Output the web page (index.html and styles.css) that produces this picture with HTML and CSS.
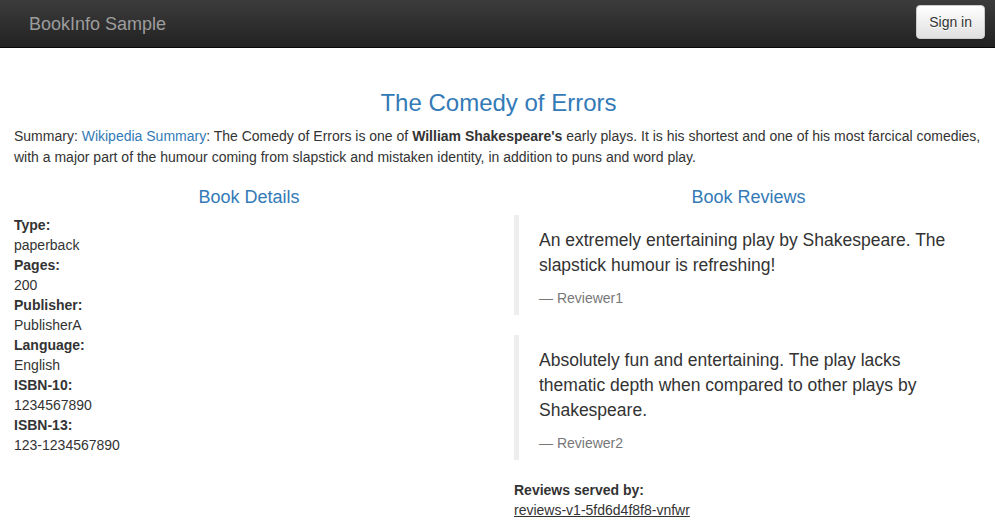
FILE: index.html
```html
<!DOCTYPE html>
<html>
<head>
<meta charset="utf-8">
<title>Simple Bookstore App</title>
<link rel="stylesheet" href="styles.css">
</head>
<body>
<nav class="navbar">
  <a class="brand" href="#">BookInfo Sample</a>
  <button type="button" class="btn">Sign in</button>
</nav>
<div class="page">
  <div class="summary-row">
    <h3 class="title">The Comedy of Errors</h3>
    <p class="summary">Summary: <a href="#">Wikipedia Summary</a>: The Comedy of Errors is one of <b>William Shakespeare's</b> early plays. It is his shortest and one of his most farcical comedies, with a major part of the humour coming from slapstick and mistaken identity, in addition to puns and word play.</p>
  </div>
  <div class="cols">
    <div class="col col-left">
      <h4 class="subtitle">Book Details</h4>
      <dl class="details">
        <dt>Type:</dt><dd>paperback</dd>
        <dt>Pages:</dt><dd>200</dd>
        <dt>Publisher:</dt><dd>PublisherA</dd>
        <dt>Language:</dt><dd>English</dd>
        <dt>ISBN-10:</dt><dd>1234567890</dd>
        <dt>ISBN-13:</dt><dd>123-1234567890</dd>
      </dl>
    </div>
    <div class="col">
      <h4 class="subtitle">Book Reviews</h4>
      <blockquote class="review">
        <p>An extremely entertaining play by Shakespeare. The slapstick humour is refreshing!</p>
        <small>Reviewer1</small>
      </blockquote>
      <blockquote class="review">
        <p>Absolutely fun and entertaining. The play lacks thematic depth when compared to other plays by Shakespeare.</p>
        <small>Reviewer2</small>
      </blockquote>
      <dl class="details">
        <dt>Reviews served by:</dt>
        <dd><u>reviews-v1-5fd6d4f8f8-vnfwr</u></dd>
      </dl>
    </div>
  </div>
</div>
</body>
</html>
```

FILE: styles.css
```css
html, body {
  margin: 0;
  padding: 0;
  overflow-x: hidden;
}
body {
  font-family: "Liberation Sans", Arial, sans-serif;
  font-size: 14px;
  line-height: 20px;
  color: #333;
  background: #fff;
}
a {
  color: #337ab7;
  text-decoration: none;
}
.navbar {
  box-sizing: border-box;
  height: 48px;
  display: flex;
  align-items: flex-start;
  justify-content: space-between;
  background-image: linear-gradient(to bottom, #3c3c3c 0, #222 100%);
  border-bottom: 1px solid #080808;
  padding: 0 10px 0 29px;
}
.brand {
  color: #9d9d9d;
  font-size: 18px;
  line-height: 20px;
  padding-top: 14px;
}
.btn {
  margin-top: 5px;
  height: 34px;
  padding: 6px 12px;
  font-family: "Liberation Sans", Arial, sans-serif;
  font-size: 14px;
  line-height: 20px;
  color: #333;
  border: 1px solid #ccc;
  border-radius: 4px;
  background-image: linear-gradient(to bottom, #fff 0, #e0e0e0 100%);
  text-shadow: 0 1px 0 #fff;
  box-shadow: inset 0 1px 0 rgba(255,255,255,.15), 0 1px 1px rgba(0,0,0,.075);
}
.page {
  width: 998px;
  padding-top: 22px;
}
.summary-row {
  padding: 0 15px 0 14px;
}
.title {
  margin: 20px 0 10px;
  font-size: 24px;
  font-weight: 500;
  line-height: 1.1;
  text-align: center;
  color: #337ab7;
}
.summary {
  margin: 0 0 8px;
  line-height: 21px;
}
.cols {
  display: grid;
  grid-template-columns: 499px 499px;
}
.col {
  padding: 0 15px;
  min-width: 0;
}
.col-left {
  padding-left: 14px;
}
.subtitle {
  margin: 12px 0 7px;
  font-size: 18px;
  font-weight: 500;
  line-height: 1.1;
  text-align: center;
  color: #337ab7;
}
.details {
  margin: 2px 0 20px;
}
.details dt {
  font-weight: bold;
}
.details dd {
  margin: 0;
}
.review {
  margin: 0 0 20px;
  padding: 13px 20px 7px;
  border-left: 5px solid #eee;
  font-size: 17.5px;
  line-height: 25px;
}
.review p {
  margin: 0 0 10px;
}
.review small {
  display: block;
  font-size: 14px;
  line-height: 20px;
  color: #777;
}
.review small::before {
  content: "\2014 \00A0";
}
```
